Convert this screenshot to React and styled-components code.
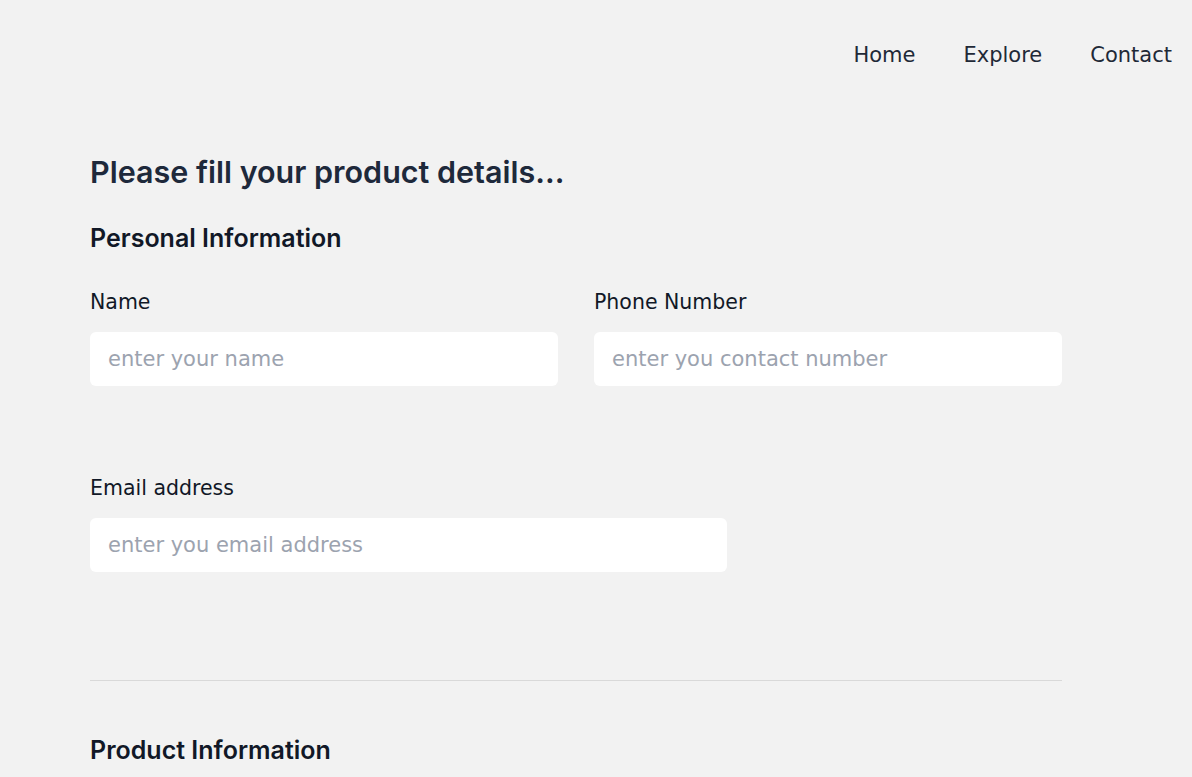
import styled, { createGlobalStyle } from 'styled-components';

const GlobalStyle = createGlobalStyle`
  body {
    margin: 0;
    background: #f2f2f2;
    font-family: "DejaVu Sans", "Open Sans", sans-serif;
    color: #1f2937;
  }
`;

const Header = styled.header`
  height: 108px;
  padding-top: 2px;
  box-sizing: border-box;
  display: flex;
  justify-content: flex-end;
  align-items: center;
  gap: 48px;
  padding-right: 20px;
`;

const NavLink = styled.a`
  font-size: 21px;
  color: #1f2937;
  text-decoration: none;
  cursor: pointer;
`;

const Main = styled.main`
  width: 972px;
  margin-left: 90px;
  padding-top: 44px;
`;

const Heading = styled.h1`
  margin: 0;
  font-family: "Inter", sans-serif;
  font-size: 30.5px;
  line-height: 40px;
  font-weight: 600;
  color: #1e293b;
`;

const SectionTitle = styled.h2`
  margin: ${p => p.$mt || '30px'} 0 0;
  font-family: "Inter", sans-serif;
  font-size: 25px;
  line-height: 32px;
  font-weight: 600;
  color: #111827;
`;

const Row = styled.div`
  display: grid;
  grid-template-columns: 1fr 1fr;
  gap: 36px;
  margin-top: 35px;
`;

const Field = styled.div`
  display: flex;
  flex-direction: column;
  gap: 17px;
  width: ${p => p.$width || 'auto'};
  margin-top: ${p => p.$mt || '0'};
`;

const Label = styled.label`
  font-size: 20.5px;
  line-height: 26px;
  color: #111827;
`;

const Input = styled.input`
  box-sizing: border-box;
  height: 54px;
  width: 100%;
  border: none;
  border-radius: 6px;
  background: #fff;
  padding: 0 18px;
  font-family: inherit;
  font-size: 21px;
  color: #111827;
  outline: none;
  &::placeholder {
    color: #9ca3af;
  }
`;

const Divider = styled.hr`
  margin: 108px 0 0;
  border: none;
  border-top: 1px solid #d9d9d9;
`;

const App = () => {
  return (
    <>
      <GlobalStyle />
      <Header>
        <NavLink>Home</NavLink>
        <NavLink>Explore</NavLink>
        <NavLink>Contact</NavLink>
      </Header>

      <Main>
        <Heading>Please fill your product details...</Heading>
        <SectionTitle>Personal Information</SectionTitle>

        <Row>
          <Field>
            <Label>Name</Label>
            <Input placeholder="enter your name" />
          </Field>
          <Field>
            <Label>Phone Number</Label>
            <Input placeholder="enter you contact number" />
          </Field>
        </Row>

        <Field $width="637px" $mt="89px">
          <Label>Email address</Label>
          <Input placeholder="enter you email address" />
        </Field>

        <Divider />
        <SectionTitle $mt="53px">Product Information</SectionTitle>
      </Main>
    </>
  )
}

export default App
